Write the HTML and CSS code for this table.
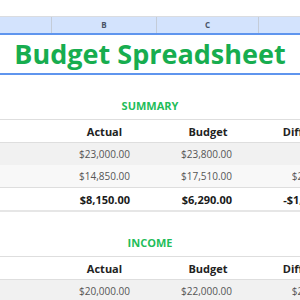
FILE: index.html
```html
<!DOCTYPE html>
<html>
<head>
    <title>Budget Spreadsheet</title>
    <meta name="viewport" content="width=device-width, initial-scale=1.0">
    <link rel="stylesheet" href="styles.css">
</head>
<body>
    <div class="sheet">
        <!-- Column letters bar -->
        <div class="col-bar">
            <div class="col-cell col-a"></div>
            <div class="col-cell col-b">B</div>
            <div class="col-cell col-c">C</div>
            <div class="col-cell col-d">D</div>
        </div>

        <h1 class="title">Budget Spreadsheet</h1>

        <h2 class="section-title">SUMMARY</h2>
        <table class="budget">
            <colgroup>
                <col class="c-label"><col class="c-num"><col class="c-num2"><col class="c-num">
            </colgroup>
            <tr class="head">
                <th></th><th>Actual</th><th>Budget</th><th>Difference</th>
            </tr>
            <tr class="odd">
                <td></td><td>$23,000.00</td><td>$23,800.00</td><td>$800.00</td>
            </tr>
            <tr class="even">
                <td></td><td>$14,850.00</td><td>$17,510.00</td><td>$2,660.00</td>
            </tr>
            <tr class="total">
                <td></td><td>$8,150.00</td><td>$6,290.00</td><td>-$1,860.00</td>
            </tr>
        </table>

        <h2 class="section-title">INCOME</h2>
        <table class="budget">
            <colgroup>
                <col class="c-label"><col class="c-num"><col class="c-num2"><col class="c-num">
            </colgroup>
            <tr class="head">
                <th></th><th>Actual</th><th>Budget</th><th>Difference</th>
            </tr>
            <tr class="odd">
                <td></td><td>$20,000.00</td><td>$22,000.00</td><td>$2,000.00</td>
            </tr>
        </table>
    </div>
</body>
</html>
```

FILE: styles.css
```css
/* Spreadsheet style budget page */
body {
    margin: 0;
    background: #fff;
    font-family: 'Open Sans', 'Liberation Sans', sans-serif;
    color: #444;
    overflow: hidden;
}

.sheet {
    width: 300px;
}

/* Column letters */
.col-bar {
    display: grid;
    grid-template-columns: 52px 105px 102px 104px;
    margin-top: 16px;
    height: 16px;
    background: #d3e3fd;
    border-top: 1px solid #dadce0;
    border-bottom: 2px solid #5f95ee;
}

.col-cell {
    border-right: 1px solid #c4ccd8;
    font-size: 8px;
    font-weight: bold;
    line-height: 16px;
    text-align: center;
    color: #4a5468;
}

.title {
    margin: 0;
    height: 38px;
    line-height: 38px;
    font-size: 27px;
    font-weight: bold;
    text-align: center;
    color: #17ad4f;
    border-bottom: 2px solid #5f95ee;
}

.section-title {
    margin: 0;
    padding: 24px 0 6px;
    font-size: 11px;
    line-height: 14px;
    font-weight: bold;
    text-align: center;
    color: #1fbd5a;
}

/* Tables */
.budget {
    border-collapse: collapse;
    table-layout: fixed;
    width: 363px;
    font-size: 10px;
}

.c-label { width: 52px; }
.c-num { width: 105px; }
.c-num2 { width: 102px; }

.budget th,
.budget td {
    height: 22px;
    padding: 0;
    white-space: nowrap;
}

.budget th {
    font-size: 11px;
    font-weight: bold;
    text-align: center;
    color: #222;
    border-top: 1px solid #dedede;
    border-bottom: 1px solid #dedede;
}

.budget td {
    text-align: right;
    padding-right: 27px;
    color: #555;
}

.budget .odd td {
    background: #f1f1f1;
}

.budget .even td {
    background: #f8f8f8;
}

.budget .total td {
    font-weight: bold;
    font-size: 11px;
    color: #1a1a1a;
    border-top: 1px solid #dedede;
    border-bottom: 2px solid #e6e6e6;
}
```
